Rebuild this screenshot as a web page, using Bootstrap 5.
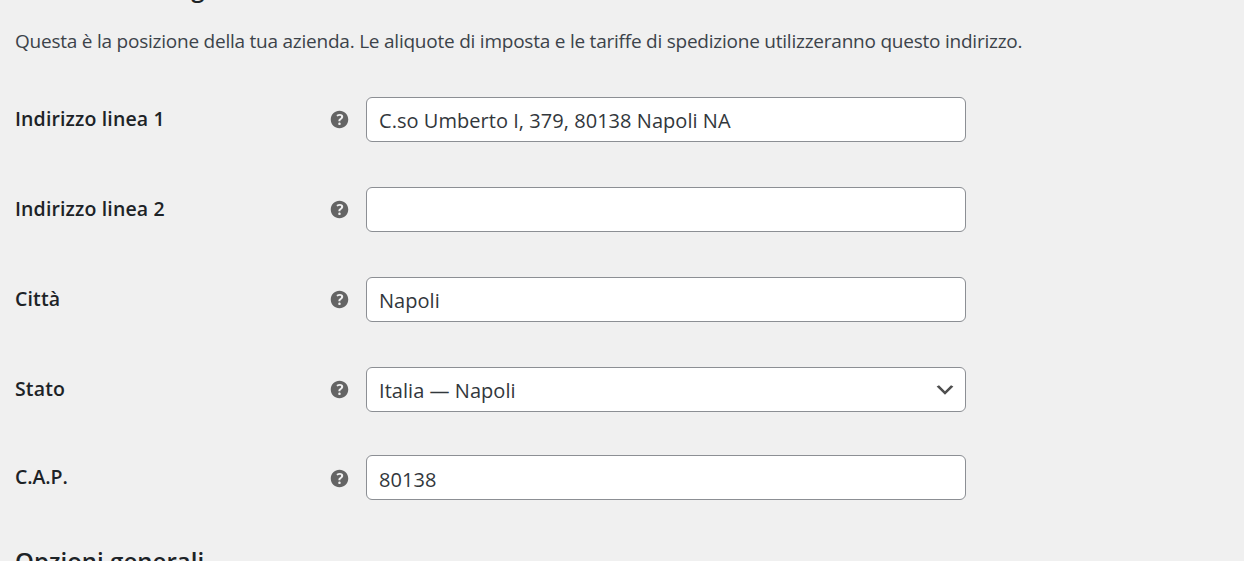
<!DOCTYPE html>
<html lang="it">
<head>
<meta charset="utf-8">
<meta name="viewport" content="width=device-width, initial-scale=1">
<title>Impostazioni negozio</title>
<link href="https://cdn.jsdelivr.net/npm/bootstrap@5.3.0/dist/css/bootstrap.min.css" rel="stylesheet">
<style>
body{background:#f0f0f0;color:#3c434a;font-family:"Open Sans","Noto Sans",sans-serif;font-size:19px;height:561px;overflow:hidden}
.settings{padding-left:15px}
.section-title{font-size:24px;font-weight:600;line-height:30px;color:#1d2327;letter-spacing:.03px;margin:0}
.store-title{margin-top:-27px}
.intro{line-height:30px;margin:23px 0 41px;white-space:nowrap;letter-spacing:-.23px}
.setting-row{height:45px;margin-bottom:45px}
.setting-row.tight{margin-bottom:43px}
.setting-label{width:315px;font-weight:550;color:#1d2327;line-height:43px;height:45px;font-size:19.5px;letter-spacing:.14px}
.help{width:36px;color:#646464;line-height:0}
.help svg{margin-left:-3px}
.settings .form-control,.settings .form-select{width:600px;height:45px;border:1px solid #8c8f94;border-radius:6px;padding:2px 12px 0;font-size:20px;color:#32373c;letter-spacing:.04px;line-height:41px;background-color:#fff}
.settings .form-select{background-image:url("data:image/svg+xml,%3Csvg xmlns='http://www.w3.org/2000/svg' viewBox='0 0 20 20'%3E%3Cpath d='M5 6l5 5 5-5 2 1-7 7-7-7 2-1z' fill='%23505050'/%3E%3C/svg%3E");background-size:24px 24px;background-position:right 8px top 10px}
.postcode .help{padding-top:2px}
.settings .postcode .form-control{padding-top:3px}
.postcode .setting-label{letter-spacing:-.1px}
.general-title{margin-top:46px}
</style>
</head>
<body>
<svg class="d-none" xmlns="http://www.w3.org/2000/svg"><symbol id="help" viewBox="0 0 20 20"><path fill="currentColor" d="M17 10c0-3.87-3.14-7-7-7-3.87 0-7 3.13-7 7s3.13 7 7 7c3.86 0 7-3.13 7-7zm-6.3 1.48H9.14v-.43c0-.38.08-.7.24-.98s.46-.57.88-.89c.41-.29.68-.53.81-.71.14-.18.2-.39.2-.62 0-.25-.09-.44-.28-.58-.19-.13-.45-.19-.79-.19-.58 0-1.25.19-2 .57l-.64-1.28c.87-.49 1.8-.74 2.77-.74.81 0 1.45.2 1.92.58.48.39.71.91.71 1.55 0 .43-.09.8-.29 1.11-.19.32-.57.67-1.11 1.06-.38.28-.61.49-.71.63-.1.15-.15.34-.15.57v.35zm-1.47 2.74c-.18-.17-.27-.42-.27-.73 0-.33.08-.58.26-.75s.43-.25.77-.25c.32 0 .57.09.75.26s.27.42.27.74c0 .3-.09.55-.27.72-.18.18-.43.27-.75.27-.33 0-.58-.09-.76-.26z"/></symbol></svg>
<main class="settings">
<h2 class="section-title store-title">Indirizzo del negozio</h2>
<p class="intro">Questa è la posizione della tua azienda. Le aliquote di imposta e le tariffe di spedizione utilizzeranno questo indirizzo.</p>
<form>
<div class="setting-row d-flex align-items-center"><label class="setting-label" for="a1">Indirizzo linea 1</label><span class="help"><svg width="25" height="25"><use href="#help"/></svg></span><input id="a1" class="form-control" value="C.so Umberto I, 379, 80138 Napoli NA"></div>
<div class="setting-row d-flex align-items-center"><label class="setting-label" for="a2">Indirizzo linea 2</label><span class="help"><svg width="25" height="25"><use href="#help"/></svg></span><input id="a2" class="form-control" value=""></div>
<div class="setting-row d-flex align-items-center"><label class="setting-label" for="city">Città</label><span class="help"><svg width="25" height="25"><use href="#help"/></svg></span><input id="city" class="form-control" value="Napoli"></div>
<div class="setting-row tight d-flex align-items-center"><label class="setting-label" for="state">Stato</label><span class="help"><svg width="25" height="25"><use href="#help"/></svg></span><select id="state" class="form-select"><option>Italia — Napoli</option></select></div>
<div class="setting-row postcode d-flex align-items-center mb-0"><label class="setting-label" for="zip">C.A.P.</label><span class="help"><svg width="25" height="25"><use href="#help"/></svg></span><input id="zip" class="form-control" value="80138"></div>
</form>
<h2 class="section-title general-title">Opzioni generali</h2>
</main>
<script src="https://cdn.jsdelivr.net/npm/bootstrap@5.3.0/dist/js/bootstrap.bundle.min.js"></script>
</body>
</html>
